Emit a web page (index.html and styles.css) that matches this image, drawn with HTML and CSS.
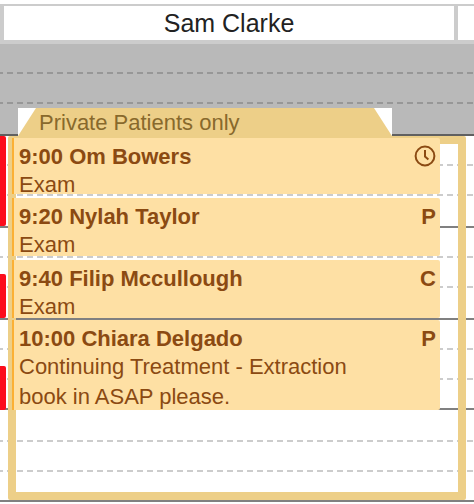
FILE: index.html
```html
<!DOCTYPE html>
<html lang="en">
<head>
    <meta charset="UTF-8">
    <meta name="viewport" content="width=device-width, initial-scale=1.0">
    <title>Appointments</title>
    <link rel="stylesheet" href="styles.css">
</head>
<body>
    <header class="columns">
        <h1 class="column-name">Sam Clarke</h1>
        <div class="column-next"></div>
    </header>
    <main class="day">
        <div class="slots">
            <div class="slot closed"></div>
            <div class="slot closed"></div>
            <div class="slot closed hour"></div>
            <div class="slot"></div>
            <div class="slot"></div>
            <div class="slot hour"></div>
            <div class="slot"></div>
            <div class="slot"></div>
            <div class="slot hour"></div>
            <div class="slot"></div>
            <div class="slot"></div>
            <div class="slot hour"></div>
            <div class="slot"></div>
            <div class="slot"></div>
            <div class="slot hour"></div>
        </div>

        <div class="busy">
            <div class="busy-block"></div>
            <div class="busy-block"></div>
            <div class="busy-block"></div>
        </div>

        <section class="session">
            <div class="session-tab">
                <h2 class="session-name">Private Patients only</h2>
            </div>
            <div class="session-body">
                <div class="appointments">
                    <article class="appointment">
                        <div class="appointment-head">
                            <h3>9:00 Om Bowers</h3>
                            <svg class="clock" viewBox="0 0 22 22" width="22" height="22" fill="none" stroke="currentColor" stroke-width="2">
                                <circle cx="11" cy="11" r="9.4"/>
                                <path d="M11 5v6.6l3.4 2.8"/>
                            </svg>
                        </div>
                        <p>Exam</p>
                    </article>
                    <article class="appointment">
                        <div class="appointment-head">
                            <h3>9:20 Nylah Taylor</h3>
                            <span class="flag">P</span>
                        </div>
                        <p>Exam</p>
                    </article>
                    <article class="appointment before-hour">
                        <div class="appointment-head">
                            <h3>9:40 Filip Mccullough</h3>
                            <span class="flag">C</span>
                        </div>
                        <p>Exam</p>
                    </article>
                    <article class="appointment last">
                        <div class="appointment-head">
                            <h3>10:00 Chiara Delgado</h3>
                            <span class="flag">P</span>
                        </div>
                        <p>Continuing Treatment - Extraction</p>
                        <p>book in ASAP please.</p>
                    </article>
                </div>
            </div>
        </section>
    </main>
</body>
</html>
```
FILE: styles.css
```css
* {
    box-sizing: border-box;
}

body {
    margin: 0;
    padding-top: 4px;
    background: #fff;
    font-family: "Liberation Sans", Arial, sans-serif;
    font-size: 22px;
    color: #8b4a12;
}

h1, h2, h3, p {
    margin: 0;
}

/* column headings */
.columns {
    display: grid;
    grid-template-columns: 1fr 16px;
    gap: 4px;
    padding: 2px 0 4px 4px;
    background: #ccc;
}

.column-name {
    background: #fff;
    color: #222;
    font-size: 25px;
    font-weight: normal;
    line-height: 34px;
    text-align: center;
}

.column-next {
    background: #fff;
}

/* time slots */
.day {
    position: relative;
}

.slots {
    display: grid;
    grid-template-rows: 30px 30px 32px 30px 30px 32px 30px 30px 32px 30px 30px 30px 32px 30px 30px;
}

.slot {
    --line: #ccc;
    background: repeating-linear-gradient(to right, var(--line) 0 3px, transparent 3px 7px, var(--line) 7px 10px) left bottom / 100% 2px no-repeat;
}

.slot.closed {
    --line: #979797;
    background-color: #b9b9b9;
}

.slot.hour {
    background-image: none;
    border-bottom: 2px solid #808080;
}

.slot.closed.hour {
    border-color: #606060;
}

.busy {
    position: absolute;
    top: 92px;
    left: 0;
    width: 6px;
    display: grid;
    grid-template-rows: 90px 44px 44px;
    gap: 48px;
}

.busy-block {
    background: #fc0d1b;
    border-radius: 0 2px 2px 0;
}

/* session drawn over the slots */
.session {
    position: absolute;
    top: 64px;
    left: 8px;
    right: 8px;
    bottom: 2px;
    display: flex;
    flex-direction: column;
}

.session-tab {
    margin: 0 74px 0 10px;
    background: #fff;
}

.session-name {
    padding: 2px 0 0 21px;
    background: #edcf88;
    clip-path: polygon(18px 0, calc(100% - 18px) 0, 100% 100%, 0 100%);
    color: #88692c;
    font-size: 22px;
    font-weight: normal;
    line-height: 26px;
}

.session-body {
    flex: 1;
    border: 8px solid #edcf88;
    border-radius: 2px;
}

.appointments {
    display: grid;
    grid-template-rows: 60px 62px 60px 90px;
    margin: -6px 18px 0 -4px;
}

.appointment {
    margin-bottom: 4px;
    padding: 5px 4px 0 5px;
    border-left: 2px solid #fbb034;
    border-radius: 0 2px 2px 0;
    background: #fee0a4;
    line-height: 28px;
}

.appointment.before-hour {
    margin-bottom: 2px;
}

.appointment.last {
    margin-bottom: 0;
}

.appointment-head {
    display: flex;
    justify-content: space-between;
}

.appointment h3,
.flag {
    font-size: 22px;
    font-weight: bold;
}

.appointment p + p {
    margin-top: 2px;
}

.clock {
    margin-top: 2px;
}
```
